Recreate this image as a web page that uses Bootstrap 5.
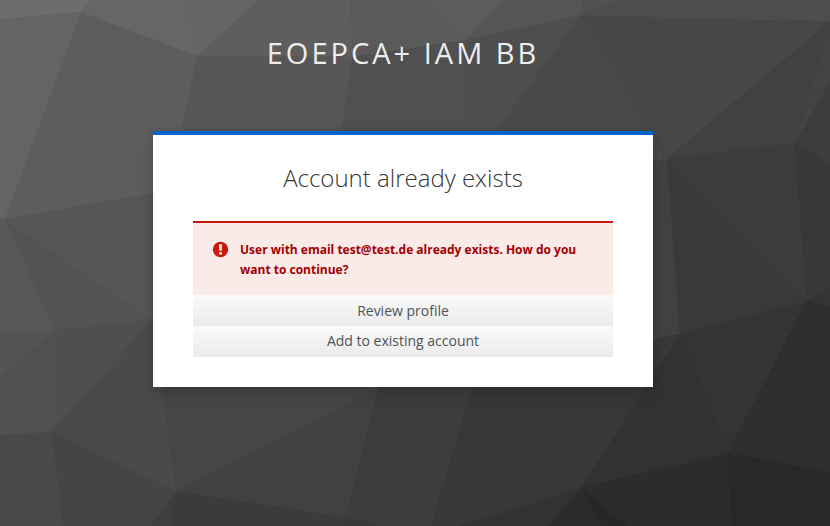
<!DOCTYPE html>
<html lang="en">
<head>
<meta charset="utf-8">
<meta name="viewport" content="width=device-width, initial-scale=1">
<title>EOEPCA+ IAM BB</title>
<link href="https://cdn.jsdelivr.net/npm/bootstrap@5.3.0/dist/css/bootstrap.min.css" rel="stylesheet">
<style>
  body { font-family: "Open Sans", sans-serif; background: #3a3a3a; height: 526px; }
  .backdrop { z-index: -1; }
  .login-page { width: 806px; }
  .realm-name { font-size: 29px; line-height: 35px; letter-spacing: 3px; color: #ededed; padding-top: 35px; margin-bottom: 61px; }
  .login-panel { width: 500px; height: 256px; border-top: 4px solid #06c; padding: 27px 40px 30px;
    box-shadow: 0 8px 16px 0 rgba(3,3,3,.16), 0 0 6px 0 rgba(3,3,3,.08); }
  .panel-title { font-size: 24px; font-weight: 300; line-height: 31px; color: #363636; margin-bottom: 28px; }
  .notice { border-top: 2px solid #c9190b; background: #faeae8; color: #a30000; padding: 17px 20px 15px 19px; height: 74px; font-size: 12px; line-height: 20px; font-weight: 700; gap: 11px; }
  .notice svg { margin-top: 1px; }
  .choice { height: 31px; border-radius: 0; font-size: 14px; line-height: 31px; padding: 0; border: 0; color: #4d5258; background: linear-gradient(#fafafa, #ebebeb); }
  .choice + .choice { line-height: 29px; padding-bottom: 2px; }
</style>
<script src="https://cdn.jsdelivr.net/npm/bootstrap@5.3.0/dist/js/bootstrap.bundle.min.js"></script>
</head>
<body class="overflow-hidden">
<!-- Faceted backdrop -->
<svg class="backdrop position-absolute top-0 start-0" width="830" height="526" viewBox="0 0 830 526" aria-hidden="true">
  <defs>
    <linearGradient id="shade" gradientUnits="userSpaceOnUse" x1="0" y1="0" x2="594" y2="594">
      <stop offset="0" stop-color="#6c6c6c"/><stop offset=".5" stop-color="#494949"/><stop offset="1" stop-color="#2a2a2a"/>
    </linearGradient>
  </defs>
  <rect width="830" height="526" fill="url(#shade)"/>
  <path fill="#6d6d6d" d="M0 0H89L81 12L0 19Z"/>
  <path fill="#666" d="M89 0H187L197 56L81 12Z"/>
  <path fill="#656565" d="M187 0H259L197 56Z"/>
  <path fill="#646464" d="M0 19L81 12L5 219L0 217Z"/>
  <path fill="#5d5d5d" d="M81 12L197 56L182 131L153 193L5 219Z"/>
  <path fill="#5e5e5e" d="M259 0H350L353 57L197 56Z"/>
  <path fill="#565656" d="M197 56L353 57L340 140H180Z"/>
  <path fill="#5a5a5a" d="M350 0H425L466 40L353 57Z"/>
  <path fill="#5d5d5d" d="M425 0H458L466 40Z"/>
  <path fill="#5c5c5c" d="M458 0H504L466 40Z"/>
  <path fill="#555" d="M504 0H583L581 15.500L466 40Z"/>
  <path fill="#515151" d="M583 0H620L581 15.500Z"/>
  <path fill="#505050" d="M353 57L466 40L463 140H340Z"/>
  <path fill="#4e4e4e" d="M466 40L581 15.500L490 140H463Z"/>
  <path fill="#494949" d="M581 15.500L667 159L650 162V140H490Z"/>
  <path fill="#4d4d4d" d="M620 0H830V22L581 15.500Z"/>
  <path fill="#474747" d="M581 15.500L829 22.500L667 159Z"/>
  <path fill="#414141" d="M829 22.500L795 143L667 159Z"/>
  <path fill="#434343" d="M830 22V82L795 143L829 22Z"/>
  <path fill="#3d3d3d" d="M830 82V164L795 143Z"/>
  <path fill="#3c3c3c" d="M795 143L807 301L667 159Z"/>
  <path fill="#393939" d="M667 159L807 301L680 334Z"/>
  <path fill="#383838" d="M795 143L830 164V288L807 301Z"/>
  <path fill="#343434" d="M807 301L830 288V307Z"/>
  <path fill="#414141" d="M667 159L680 334L650 341V162Z"/>
  <path fill="#343434" d="M680 334L807 301L728 453Z"/>
  <path fill="#323232" d="M680 334L728 453L581 488Z"/>
  <path fill="#2e2e2e" d="M807 301L830 307V473L728 453Z"/>
  <path fill="#2c2c2c" d="M728 453L732 526H548L581 488Z"/>
  <path fill="#282828" d="M728 453L830 473V526H732Z"/>
  <path fill="#272727" d="M581 488L628 526H602Z"/>
  <path fill="#323232" d="M581 488L548 526H460Z"/>
  <path fill="#383838" d="M680 334L581 488L460 526H431L474 380L640 342Z"/>
  <path fill="#3d3d3d" d="M378 380H474L431 526L378 389Z"/>
  <path fill="#3c3c3c" d="M378 389L431 526H380L345 517Z"/>
  <path fill="#383838" d="M345 517L380 526H346Z"/>
  <path fill="#3b3b3b" d="M176 491L345 517L346 526H170Z"/>
  <path fill="#3e3e3e" d="M176 491L170 526H150Z"/>
  <path fill="#414141" d="M176 491L378 389L345 517Z"/>
  <path fill="#464646" d="M176 491L152 320L378 380V389Z"/>
  <path fill="#4a4a4a" d="M152 320L176 491L51 432Z"/>
  <path fill="#454545" d="M51 432L176 491L150 526H63Z"/>
  <path fill="#494949" d="M0 435L51 432L63 526H0Z"/>
  <path fill="#505050" d="M54 330L51 432L0 435V377Z"/>
  <path fill="#4f4f4f" d="M54 330L152 320L51 432Z"/>
  <path fill="#545454" d="M0 331L54 330L0 377Z"/>
  <path fill="#585858" d="M0 225L5 219L54 330L0 331Z"/>
  <path fill="#535353" d="M5 219L152 320L54 330Z"/>
  <path fill="#565656" d="M5 219L155 193V322Z"/>
  <path fill="#5c5c5c" d="M0 217L5 219L0 225Z"/>
</svg>

<div class="login-page d-flex flex-column align-items-center">
  <header class="realm-name text-uppercase text-center">EOEPCA+ IAM BB</header>
  <main class="login-panel bg-white">
    <h1 class="panel-title text-center">Account already exists</h1>
    <div class="notice d-flex align-items-start" role="alert">
      <svg class="flex-shrink-0" width="17" height="17" viewBox="0 0 17 17" aria-hidden="true"><circle cx="8.500" cy="8.500" r="7.700" fill="#c9190b"/><path fill="#faeae8" d="M6.900 3.200h3.200l-.3 6.600H7.200zM7 11.200h3v2.200H7z"/></svg>
      <div>User with email test@test.de already exists. How do you want to continue?</div>
    </div>
    <button type="button" class="choice btn d-block w-100">Review profile</button>
    <button type="button" class="choice btn d-block w-100">Add to existing account</button>
  </main>
</div>
</body>
</html>
